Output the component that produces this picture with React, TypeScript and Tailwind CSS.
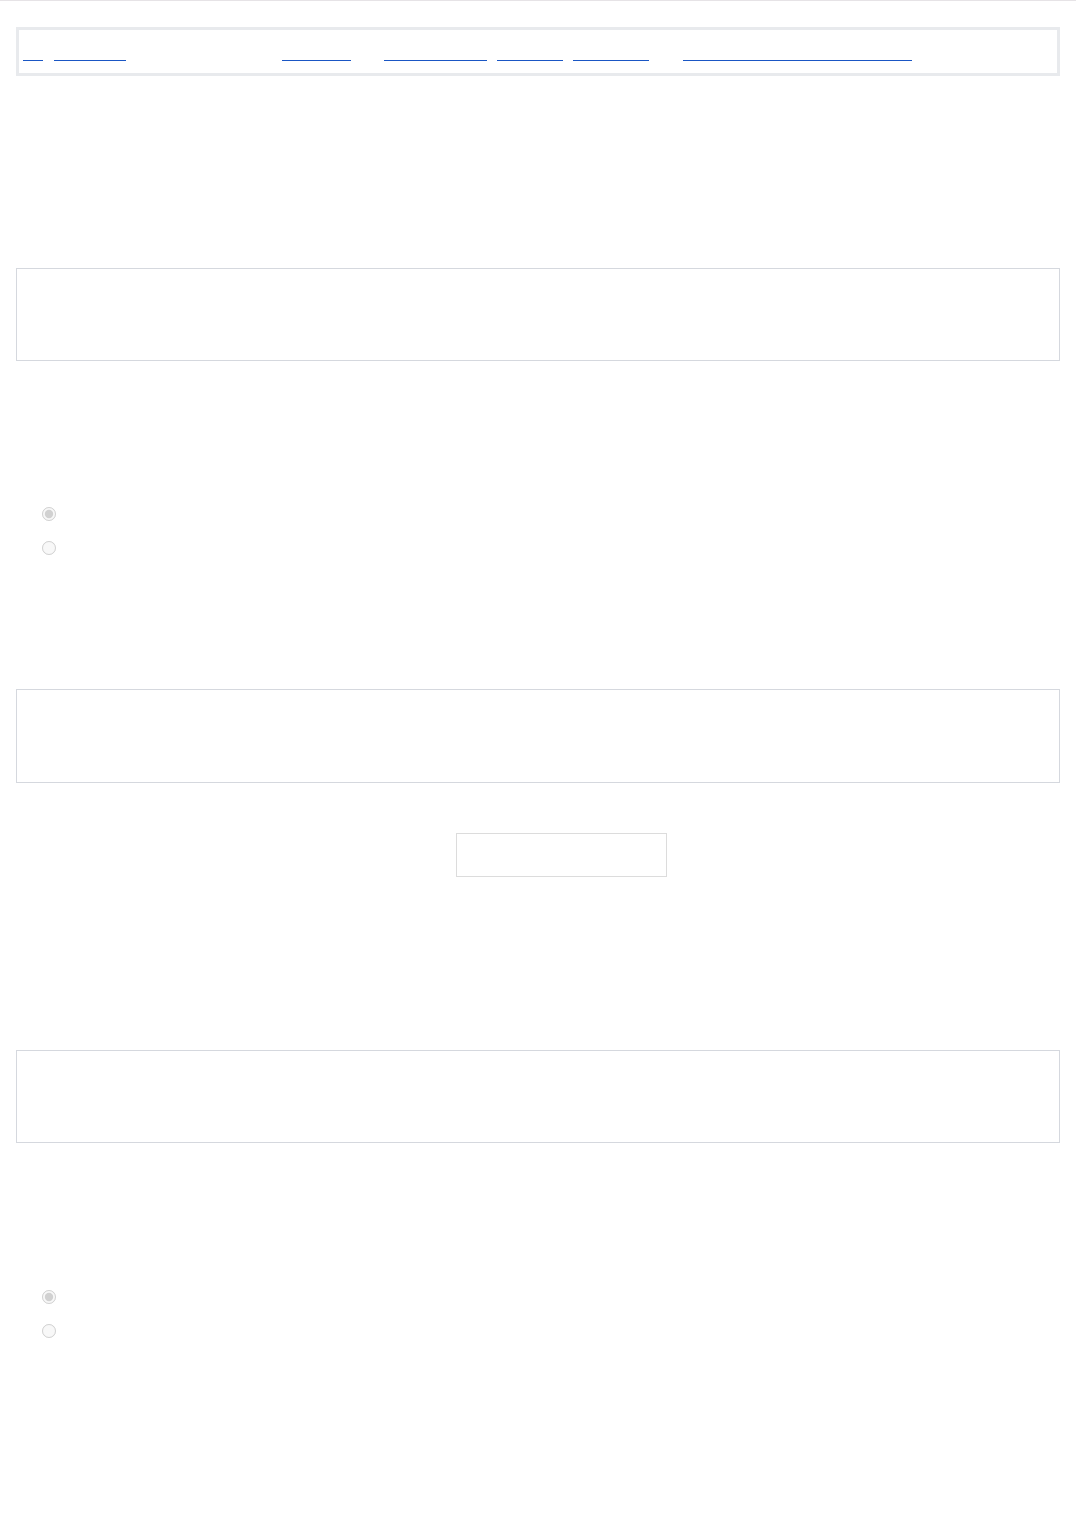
import { FC } from "react";

// ── Nav underlines (link text renders invisible in the reference) ─────────────

const LINKS = [
  { w: "w-[20px]", ml: "ml-[4px]" },
  { w: "w-[72px]", ml: "ml-[11px]" },
  { w: "w-[69px]", ml: "ml-[156px]" },
  { w: "w-[103px]", ml: "ml-[33px]" },
  { w: "w-[66px]", ml: "ml-[10px]" },
  { w: "w-[76px]", ml: "ml-[10px]" },
  { w: "w-[229px]", ml: "ml-[34px]" },
];

const Panel: FC<{ className?: string }> = ({ className = "" }) => (
  <div className={`border border-[#d5d8de] bg-white ${className}`} />
);

const RadioPair: FC<{ name: string; className?: string }> = ({ name, className = "" }) => (
  <div className={`flex flex-col ${className}`}>
    <label className="h-[34px] flex items-center">
      <input type="radio" name={name} defaultChecked disabled className="m-0 ml-[26px] w-[14px] h-[14px]" />
    </label>
    <label className="h-[34px] flex items-center">
      <input type="radio" name={name} disabled className="m-0 ml-[26px] w-[14px] h-[14px]" />
    </label>
  </div>
);

export default function App() {
  return (
    <div className="min-h-screen bg-white" style={{ fontFamily: '"Liberation Sans", Arial, sans-serif' }}>
      <div className="h-px bg-[#e6e3e6]" />

      <div className="px-4">
        {/* Top nav */}
        <nav className="mt-[26px] h-[49px] border-[3px] border-[#e8eaed] flex items-start">
          {LINKS.map((l, i) => (
            <a key={i} href="#" className={`block mt-[30px] h-px bg-[#1a56c4] ${l.w} ${l.ml}`} />
          ))}
        </nav>

        <Panel className="mt-[192px] h-[93px]" />

        <RadioPair name="opt-a" className="mt-[136px]" />

        <Panel className="mt-[124px] h-[94px]" />

        <div className="mt-[50px] ml-[440px] w-[211px] h-[44px] border border-[#dcdcdc] bg-white" />

        <Panel className="mt-[173px] h-[93px]" />

        <RadioPair name="opt-b" className="mt-[137px]" />
      </div>
    </div>
  );
}
